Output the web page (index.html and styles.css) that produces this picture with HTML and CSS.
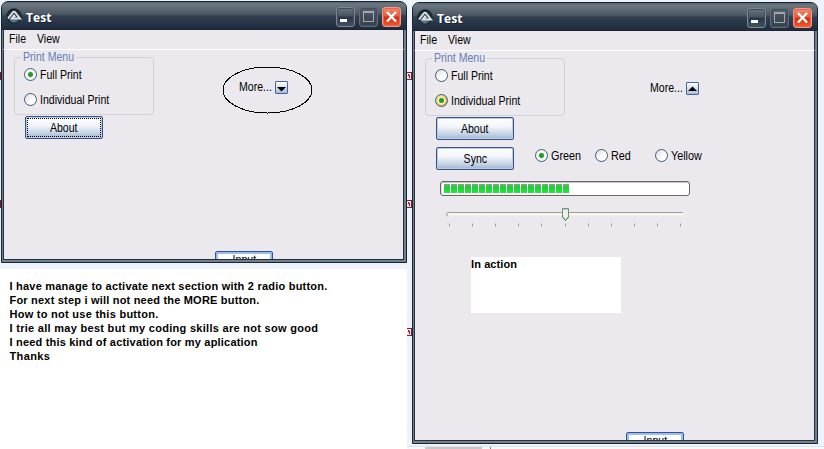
FILE: index.html
```html
<!DOCTYPE html>
<html lang="en">
<head>
<meta charset="utf-8">
<title>Test</title>
<link rel="stylesheet" href="styles.css">
</head>
<body>
<svg width="0" height="0" class="defs" aria-hidden="true">
  <defs>
    <radialGradient id="orb" cx="50%" cy="85%" r="80%"><stop offset="0" stop-color="#5f8297"/><stop offset=".5" stop-color="#2b3c4b"/><stop offset="1" stop-color="#1b2731"/></radialGradient>
    <symbol id="app" viewBox="0 0 16 16">
      <circle cx="8" cy="8" r="7.200" fill="url(#orb)" stroke="#15212b"/>
      <path d="M2 10.500 6.800 4.400q1.200-1.300 2.400 0L14 10.500H5.800l2.200-3 1.200 1.500" fill="none" stroke="#e0e2e3" stroke-width="1.900"/>
    </symbol>
  </defs>
</svg>
<main class="desktop">
  <section class="note">
    <p class="l1">I have manage to activate next section with 2 radio button.</p>
    <p class="l2">For next step i will not need the MORE button.</p>
    <p class="l3">How to not use this button.</p>
    <p class="l4">I trie all may best but my coding skills are not sow good</p>
    <p class="l5">I need this kind of activation for my aplication</p>
    <p class="l6">Thanks</p>
  </section>
  <i class="mark solid m1"></i><i class="mark solid m2"></i>
  <i class="mark m3"></i><i class="mark m4"></i><i class="mark m5"></i>

  <section class="window first">
    <header class="titlebar">
      <svg class="logo"><use href="#app"/></svg><h1>Test</h1>
      <div class="controls"><b class="ctl min"></b><b class="ctl max"></b><b class="ctl close"><svg viewBox="0 0 19 20"><path d="m5 5 9 9.500M14 5 5 14.500" stroke="#fff" stroke-width="2.400"/></svg></b></div>
    </header>
    <nav class="menu"><span class="t">File</span><span class="t">View</span></nav>
    <div class="client">
      <div class="top">
        <fieldset class="group">
          <legend><span class="t">Print Menu</span></legend>
          <label class="option"><i class="radio on"></i><span class="t">Full Print</span></label>
          <label class="option"><i class="radio"></i><span class="t">Individual Print</span></label>
        </fieldset>
        <div class="more"><span class="t">More...</span><i class="arrow"><svg viewBox="0 0 13 13"><path d="M2 6h9L6.500 10.500z"/></svg></i></div>
      </div>
      <button class="button focus"><span class="t">About</span></button>
      <button class="input"><span class="t">Input</span></button>
    </div>
    <svg class="ellipse" viewBox="0 0 91 48"><ellipse cx="45.500" cy="24" rx="44.500" ry="23" fill="none" stroke="#000" shape-rendering="crispEdges"/></svg>
  </section>

  <section class="window second">
    <header class="titlebar">
      <svg class="logo"><use href="#app"/></svg><h1>Test</h1>
      <div class="controls"><b class="ctl min"></b><b class="ctl max"></b><b class="ctl close"><svg viewBox="0 0 19 20"><path d="m5 5 9 9.500M14 5 5 14.500" stroke="#fff" stroke-width="2.400"/></svg></b></div>
    </header>
    <nav class="menu"><span class="t">File</span><span class="t">View</span></nav>
    <div class="client">
      <div class="top">
        <fieldset class="group">
          <legend><span class="t">Print Menu</span></legend>
          <label class="option"><i class="radio"></i><span class="t">Full Print</span></label>
          <label class="option"><i class="radio on hot"></i><span class="t">Individual Print</span></label>
        </fieldset>
        <div class="more"><span class="t">More...</span><i class="arrow"><svg viewBox="0 0 13 13"><path d="M2 9h9L6.500 4.500z"/></svg></i></div>
      </div>
      <button class="button"><span class="t">About</span></button>
      <div class="syncrow">
        <button class="button"><span class="t">Sync</span></button>
        <div class="colours">
          <label class="option"><i class="radio on"></i><span class="t">Green</span></label>
          <label class="option"><i class="radio"></i><span class="t">Red</span></label>
          <label class="option"><i class="radio"></i><span class="t">Yellow</span></label>
        </div>
      </div>
      <div class="progress"><div class="fill"></div></div>
      <svg class="slider" viewBox="0 0 240 20">
        <rect x="2" y="4.500" width="237" height="3" fill="#f8f6f1"/>
        <path d="M238 4.500H4Q1.500 4.500 1.500 6T3 8" fill="none" stroke="#a09c97"/>
        <path d="M4.500 15.500v3M27.500 15.500v3M50.500 15.500v3M73.500 15.500v3M96.500 15.500v3M120.500 15.500v3M143.500 15.500v3M166.500 15.500v3M189.500 15.500v3M212.500 15.500v3M235.500 15.500v3" stroke="#a09ea0"/>
        <path d="M117.500.500h6v8.500l-3 3.500-3-3.500z" fill="#eef0ee" stroke="#78877d"/>
        <path d="M118 1h5" stroke="#72ad7d"/><path d="m117.500 9 3 3.500 3-3.500" fill="none" stroke="#379349"/>
      </svg>
      <div class="status">In action</div>
      <button class="input"><span class="t">Input</span></button>
    </div>
  </section>
  <footer class="strip"><i></i></footer>
</main>
</body>
</html>
```
FILE: styles.css
```css
* { box-sizing: border-box; }
body { margin: 0; font: 12px/14px "Liberation Sans", sans-serif; color: #000; }
.defs { position: absolute; }
.desktop { position: relative; width: 824px; height: 449px; overflow: hidden; background: #eef3fa; }
.t { display: inline-block; white-space: nowrap; transform: scaleX(.88); transform-origin: left center; }

.note { position: absolute; left: 0; top: 269px; width: 407px; height: 180px; padding: 10px 9.5px; background: #fff; font: bold 11px/14px "Liberation Sans", sans-serif; }
.note p { margin: 0; white-space: nowrap; letter-spacing: .22px; }
.note .l2 { letter-spacing: .2px; }
.note .l3 { letter-spacing: .27px; }
.note .l4 { letter-spacing: .29px; }
.note .l5 { letter-spacing: .19px; }
.note .l6 { letter-spacing: .37px; }

.mark { position: absolute; left: 407px; width: 5px; height: 8px; border: 1px solid #8b1d33; border-width: 1px 1px 1px 0; background: #f5e5e9; }
.mark::before, .mark::after { content: ""; position: absolute; width: 1px; height: 2px; top: 1px; left: 1px; background: #8b1d33; box-shadow: 1px 1px #8b1d33; }
.mark::after { top: 4px; height: 1px; left: 2px; box-shadow: none; }
.mark.solid { left: 0; width: 2px; background: #751630; }
.m1, .m3 { top: 72px; }
.m2, .m4 { top: 200px; }
.m5 { top: 328px; }

.window { position: absolute; width: 406px; border: 1px solid #172433; border-radius: 7px 7px 0 0; background: #737f8c; padding: 0 2px 2px 1px; overflow: hidden; }
.first { left: 1px; top: 1px; height: 262px; }
.second { left: 412px; top: 2px; height: 442px; }
.titlebar { display: flex; align-items: flex-start; height: 28px; margin: 0 -2px 0 -1px; padding: 5px 5px 0 4px; background: linear-gradient(#56616c 0, #6d7781 2px, #596570 8px, #4c5966 12px, #323f50 14px, #293649 20px, #202c3d 27px, #17212f); }
.logo { width: 16px; height: 16px; margin-top: 1px; }
h1 { margin: 1px 0 0 4px; color: #fff; font: bold 13px/18px "Open Sans", sans-serif; text-shadow: 1px 1px #17212d; transform: scaleX(.93); transform-origin: left; }
.controls { display: flex; gap: 4px; margin-left: auto; }
.ctl { position: relative; width: 19px; height: 20px; border: 1px solid #7d8791; border-radius: 3px; background: linear-gradient(#697580, #465462 45%, #263447 50%, #435366); box-shadow: inset 0 0 0 1px #404d5a; }
.min::after { content: ""; position: absolute; left: 3px; top: 11px; width: 7px; height: 3px; background: #fff; }
.max { border-color: #606b76; background: linear-gradient(#56616c, #3f4b58 50%, #34414f); }
.max::after { content: ""; position: absolute; left: 3px; top: 3px; width: 9px; height: 8px; border: 1px solid #a4a8ad; border-top-width: 2px; }
.close { border-color: #ef9b87; background: linear-gradient(#f18a70, #e85b3c 45%, #d92b0b 50%, #f05a31); box-shadow: inset 0 0 0 1px #e8674c; }
.close svg { display: block; width: 19px; height: 20px; margin: -1px; }
.menu { display: flex; gap: 9px; height: 20px; padding: 2px 5px; border-left: 1px solid #25313f; background: #ebe9ed; border-bottom: 1px solid #fff; border-right: 1px solid #25313f; }
.client { position: relative; height: calc(100% - 48px); padding: 0 10px; background: #ebe9ed; border: 1px solid #25313f; border-top: 0; overflow: hidden; }

.top { display: flex; height: 65px; }
.group { width: 140px; height: 65px; margin: 0; padding: 4px 0 0 9px; border: 1px solid #d3d1d6; border-radius: 4px; min-width: 0; }
legend { width: 55px; height: 14px; padding: 0 2px; margin-left: -3px; color: #6580b5; }
.option { display: flex; align-items: center; height: 13px; gap: 3px; }
.group .option + .option { margin-top: 12px; }
.radio { flex: none; width: 13px; height: 13px; border: 1px solid #3e5c7e; border-radius: 50%; background: linear-gradient(135deg, #dedfda, #fff 65%); }
.on { background: radial-gradient(circle, #22a022 0 2px, #6bc16b 2.5px, transparent 3px), #f6f6f3; }
.hot { background: radial-gradient(circle, #22a022 0 2px, #8fc46a 2.5px, #f4ecc4 3px, #f7e3a0 4px, transparent 4.5px), linear-gradient(135deg, #fbe5a0, #dba53b); }
.more { display: flex; height: 14px; margin: 30px 0 0 85px; }
.more .t { width: 36px; }
.arrow { width: 13px; height: 13px; margin-top: 1px; border: 1px solid #456499; border-radius: 1px; background: linear-gradient(#fff, #a8bddc); }
.arrow svg { display: block; width: 13px; height: 13px; margin: -1px; }
.button { display: flex; justify-content: center; align-items: center; width: 78px; height: 23px; margin: 1px 0 0 11px; padding: 0; border: 1px solid #34538a; border-radius: 2px; background: linear-gradient(#fff, #f2f6fa 40%, #c7d5e6 75%, #9fb5d2); box-shadow: inset 0 0 0 1px #bdcce0; color: #000; font: inherit; }
.button .t, .input .t { transform-origin: center; }
.focus { outline: 1px dotted #000; outline-offset: -3px; }
.input { position: absolute; left: 211px; bottom: -9px; width: 58px; height: 17px; padding: 0; border: 1px solid #2c5498; border-radius: 2px; background: #fff; box-shadow: inset 0 0 0 2px #9dbdf0; color: #000; font: inherit; }
.syncrow { display: flex; margin-top: 7px; }
.syncrow .button { margin-top: 0; }
.colours { display: grid; grid-template-columns: 60px 60px 60px; margin: 2px 0 0 21px; height: 13px; }
.colours .t { transform: scaleX(.9); }
.progress { width: 250px; height: 15px; margin: 11px 0 0 15px; padding: 2px 3px; border: 1px solid #686868; border-radius: 3px; background: #fff; box-shadow: inset 0 1px #c4c4c4, inset 1px 0 #ddd; }
.fill { width: 125px; height: 9px; background: repeating-linear-gradient(90deg, transparent 0 6px, #fff 6px 7px), linear-gradient(#73b578, #38b949 35%, #0be428 55%, #16e532 80%, #56c766); }
.slider { display: block; width: 240px; height: 20px; margin: 12px 0 0 20px; }
.status { width: 150px; height: 56px; margin: 29px 0 0 46px; background: #fff; font: bold 11px/15px "Liberation Sans", sans-serif; letter-spacing: .1px; }

.ellipse { position: absolute; left: 220px; top: 64px; width: 91px; height: 48px; }
.strip { position: absolute; left: 407px; top: 446px; width: 417px; height: 3px; border-top: 1px solid #dfe1e5; background: #f7f8fa; padding-left: 18px; }
.strip i { display: block; width: 66px; height: 2px; background: linear-gradient(90deg, #c7c7c7 57px, #f7f8fa 57px 65px, #777 65px); }
```
